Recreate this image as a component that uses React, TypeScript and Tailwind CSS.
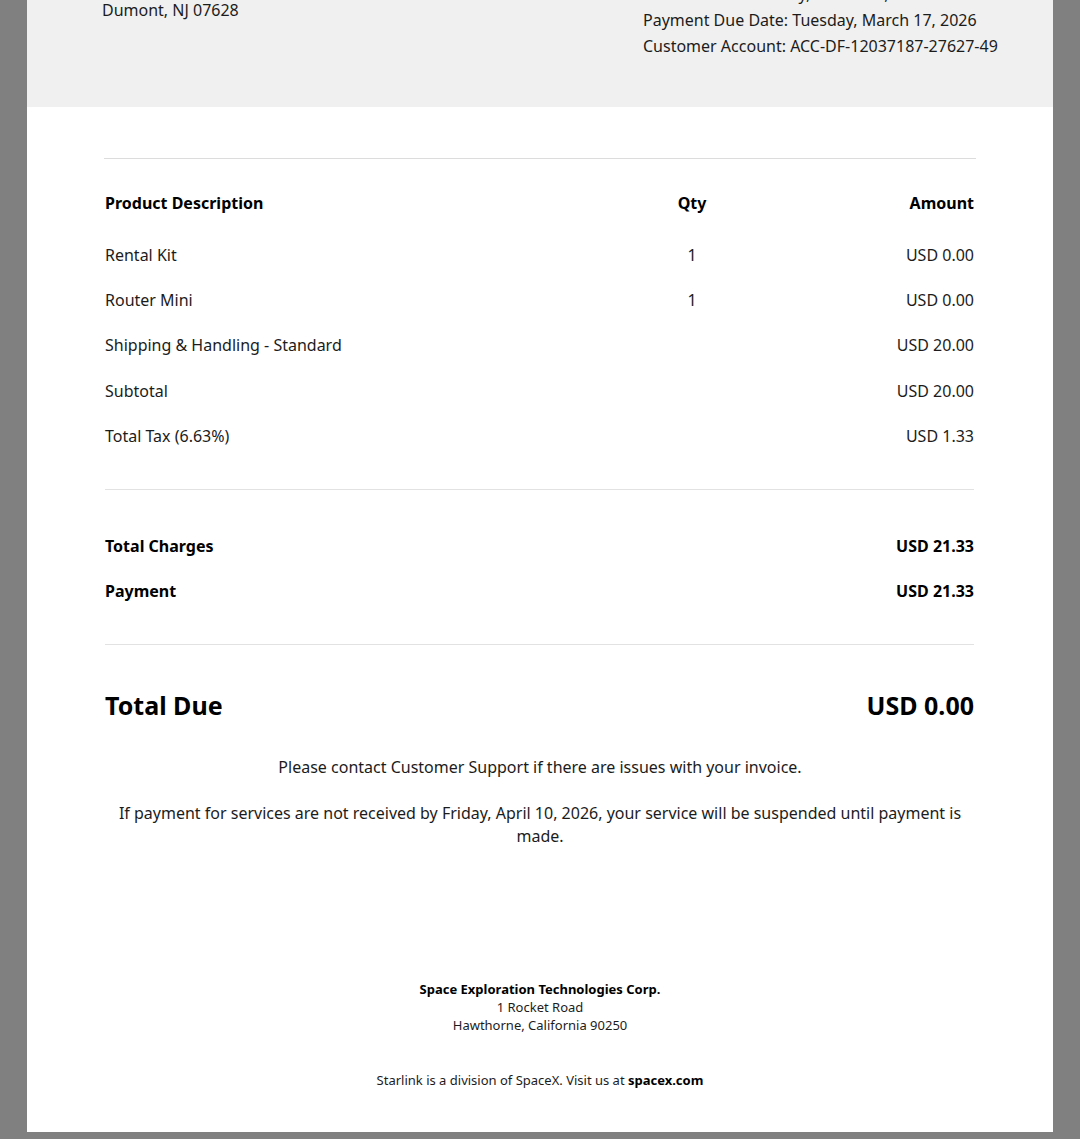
import React from 'react';

const items = [
  { name: 'Rental Kit', qty: '1', amount: 'USD 0.00' },
  { name: 'Router Mini', qty: '1', amount: 'USD 0.00' },
  { name: 'Shipping & Handling - Standard', qty: '', amount: 'USD 20.00' },
  { name: 'Subtotal', qty: '', amount: 'USD 20.00' },
  { name: 'Total Tax (6.63%)', qty: '', amount: 'USD 1.33' },
];

export default function App() {
  return (
    <div
      className="min-h-[1139px] overflow-hidden bg-[#808080] px-[27px] pb-[8px] text-[#1c1c1c]"
      style={{ fontFamily: '"Noto Sans", "Open Sans", sans-serif' }}
    >
      <div className="-mt-[19px] bg-white">
        {/* header */}
        <div className="flex bg-[#f0f0f0] pb-[48px] pl-[75px] text-[16px] leading-[26px]">
          <div className="mt-[16px] w-[541px]">
            <p>Dumont, NJ 07628</p>
          </div>
          <div>
            <p>Invoice Date: Tuesday, March 17, 2026</p>
            <p>Payment Due Date: Tuesday, March 17, 2026</p>
            <p>Customer Account: ACC-DF-12037187-27627-49</p>
          </div>
        </div>

        <div className="px-[77px] pt-[51px]">
          <div className="h-px bg-[#dcdcdc]" />

          <div className="pl-[1px] pr-[2px] pt-[21px] text-[16px]">
            <div className="grid grid-cols-[487px_200px_1fr] items-center pt-[11px] pb-[17px] font-bold text-black">
              <span>Product Description</span>
              <span className="text-center">Qty</span>
              <span className="text-right">Amount</span>
            </div>
            {items.map((it) => (
              <div key={it.name} className="grid h-[45.3px] grid-cols-[487px_200px_1fr] items-center">
                <span>{it.name}</span>
                <span className="text-center">{it.qty}</span>
                <span className="text-right">{it.amount}</span>
              </div>
            ))}
          </div>

          <div className="ml-[1px] mr-[2px] mt-[31px] h-px bg-[#e2e2e2]" />

          <div className="pl-[1px] pr-[2px] pt-[33px] pb-[31px] text-[16px] font-bold text-black">
            <div className="flex h-[45px] items-center justify-between">
              <span>Total Charges</span>
              <span>USD 21.33</span>
            </div>
            <div className="flex h-[45px] items-center justify-between">
              <span>Payment</span>
              <span>USD 21.33</span>
            </div>
          </div>

          <div className="ml-[1px] mr-[2px] h-px bg-[#e2e2e2]" />

          <div className="flex items-center justify-between pl-[1px] pr-[2px] pt-[42px] text-[25px] font-bold text-black">
            <span>Total Due</span>
            <span>USD 0.00</span>
          </div>

          <div className="pt-[31px] text-center text-[16px] leading-[23px]">
            <p>Please contact Customer Support if there are issues with your invoice.</p>
            <p className="mt-[23px]">
              If payment for services are not received by Friday, April 10, 2026, your service will be suspended until
              payment is made.
            </p>
          </div>

          <div className="pt-[132px] pb-[43px] text-center text-[13px] leading-[18px]">
            <p className="font-bold text-black">Space Exploration Technologies Corp.</p>
            <p>1 Rocket Road</p>
            <p>Hawthorne, California 90250</p>
            <p className="mt-[37px]">
              Starlink is a division of SpaceX. Visit us at <span className="font-bold text-black">spacex.com</span>
            </p>
          </div>
        </div>
      </div>
    </div>
  );
}
